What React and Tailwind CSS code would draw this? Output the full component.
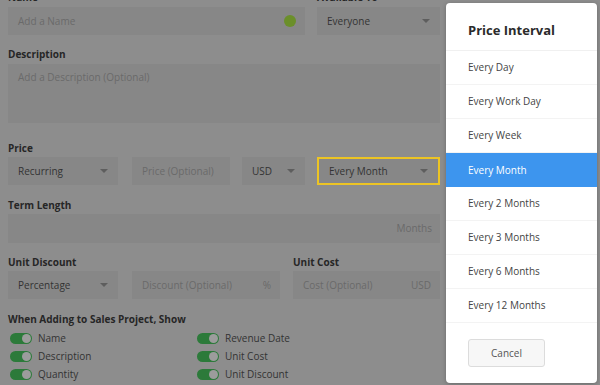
import React from "react";

const font = { fontFamily: '"Open Sans", "Noto Sans", sans-serif' };

function Caret() {
  return (
    <svg width="8" height="5" viewBox="0 0 8 5" className="shrink-0">
      <path d="M0 0 L8 0 L4 4 Z" fill="#5e5e5e" />
    </svg>
  );
}

function Select({ value, className = "" }) {
  return (
    <div className={`h-[28px] bg-[#878787] flex items-center justify-between pl-[10px] pr-[10px] text-[10px] text-[#333] ${className}`}>
      <span>{value}</span>
      <Caret />
    </div>
  );
}

function Input({ placeholder, suffix, className = "" }) {
  return (
    <div className={`h-[28px] bg-[#878787] flex items-center justify-between pl-[10px] pr-[9px] text-[10px] text-[#6a6a6a] ${className}`}>
      <span>{placeholder}</span>
      {suffix && <span>{suffix}</span>}
    </div>
  );
}

function Label({ children, className = "" }) {
  return <div className={`text-[10px] font-bold leading-[14px] text-[#262626] ${className}`}>{children}</div>;
}

function Toggle({ label }) {
  return (
    <div className="flex items-center h-[18px] gap-[6px]">
      <div className="w-[22px] h-[11px] rounded-full bg-[#2c7a3a] relative">
        <div className="absolute right-[1px] top-[1px] w-[9px] h-[9px] rounded-full bg-[#9c9c9c]" />
      </div>
      <span className="text-[10px] text-[#333]">{label}</span>
    </div>
  );
}

const items = [
  "Every Day",
  "Every Work Day",
  "Every Week",
  "Every Month",
  "Every 2 Months",
  "Every 3 Months",
  "Every 6 Months",
  "Every 12 Months",
];

export default function App() {
  return (
    <div className="w-[600px] h-[385px] bg-[#8d8d8d] relative overflow-hidden" style={font}>
      <div className="w-[432px] ml-[8px] -mt-[10px] flex flex-col">
        <div className="flex gap-[12px]">
          <div className="flex flex-col w-[297px]">
            <Label className="mb-[3px]">Name</Label>
            <div className="h-[28px] bg-[#878787] flex items-center justify-between pl-[10px] pr-[9px] text-[10px] text-[#6a6a6a]">
              <span>Add a Name</span>
              <div className="w-[12px] h-[12px] rounded-full bg-[#6b8f2a]" />
            </div>
          </div>
          <div className="flex flex-col w-[123px]">
            <Label className="mb-[3px]">Available To</Label>
            <Select value="Everyone" />
          </div>
        </div>

        <Label className="mt-[12px] mb-[3px]">Description</Label>
        <div className="h-[59px] bg-[#878787] pl-[10px] pt-[6px] text-[10px] text-[#6a6a6a]">
          Add a Description (Optional)
        </div>

        <Label className="mt-[18px] mb-[2px]">Price</Label>
        <div className="flex">
          <Select value="Recurring" className="w-[110px]" />
          <Input placeholder="Price (Optional)" className="w-[98px] ml-[14px]" />
          <Select value="USD" className="w-[63px] ml-[12px]" />
          <Select value="Every Month" className="w-[123px] ml-[12px] border-2 border-[#ecc424] pl-[8px] pr-[8px]" />
        </div>

        <Label className="mt-[13px] mb-[2px]">Term Length</Label>
        <div className="h-[29px] bg-[#878787] flex items-center justify-end pr-[8px] text-[10px] text-[#6a6a6a]">
          Months
        </div>

        <div className="flex gap-[13px] mt-[12px]">
          <div className="flex flex-col">
            <Label className="mb-[2px]">Unit Discount</Label>
            <div className="flex gap-[14px]">
              <Select value="Percentage" className="w-[110px]" />
              <Input placeholder="Discount (Optional)" suffix="%" className="w-[148px]" />
            </div>
          </div>
          <div className="flex flex-col flex-1">
            <Label className="mb-[2px]">Unit Cost</Label>
            <Input placeholder="Cost (Optional)" suffix="USD" className="w-full" />
          </div>
        </div>

        <Label className="mt-[13px] mb-[3px]">When Adding to Sales Project, Show</Label>
        <div className="flex pl-[2px]">
          <div className="flex flex-col w-[187px]">
            <Toggle label="Name" />
            <Toggle label="Description" />
            <Toggle label="Quantity" />
          </div>
          <div className="flex flex-col">
            <Toggle label="Revenue Date" />
            <Toggle label="Unit Cost" />
            <Toggle label="Unit Discount" />
          </div>
        </div>
      </div>

      <div className="absolute left-[446px] top-[3px] w-[151px] h-[380px] bg-white rounded-[4px] shadow-[0_1px_4px_rgba(0,0,0,0.25)] flex flex-col">
        <div className="h-[48px] flex items-center pl-[22px] text-[13px] font-bold text-[#2b2b2b] border-b border-[#f0f0f0] pt-[9px]">
          Price Interval
        </div>
        {items.map((it) => (
          <div
            key={it}
            className={
              it === "Every Month"
                ? "h-[34px] flex items-center pl-[22px] text-[10px] bg-[#3d95ee] text-white"
                : "h-[34px] flex items-center pl-[22px] text-[10px] text-[#444] border-b border-[#f3f3f3]"
            }
          >
            {it}
          </div>
        ))}
        <div className="pl-[22px] pt-[16px]">
          <div className="w-[77px] h-[28px] rounded-[3px] border border-[#dcdcdc] bg-[#f7f7f7] flex items-center justify-center text-[10px] text-[#555]">
            Cancel
          </div>
        </div>
      </div>
    </div>
  );
}
